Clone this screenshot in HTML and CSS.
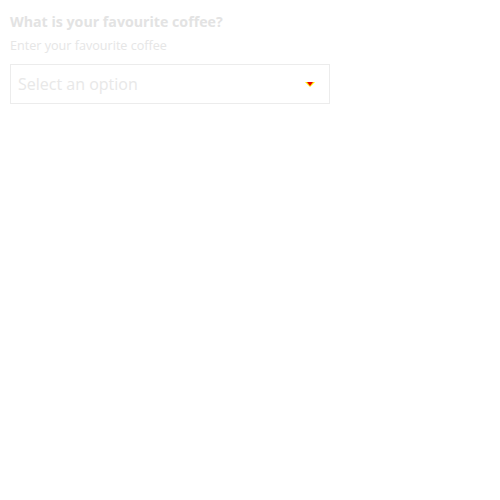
FILE: index.html
```html
<!DOCTYPE html>
<html>
<head>
<meta charset="utf-8">
<link rel="stylesheet" href="styles.css">
</head>
<body>
<div class="field">
  <div class="label">What is your favourite coffee?</div>
  <div class="hint">Enter your favourite coffee</div>
  <div class="select">
    <span class="placeholder">Select an option</span>
    <span class="arrow"><span class="arrow-inner"></span></span>
  </div>
</div>
</body>
</html>
```
FILE: styles.css
```css
html, body { margin: 0; padding: 0; background: #fff; }
body { font-family: "Open Sans", sans-serif; }
.field { padding: 12px 10px; width: 320px; }
.label { font-size: 14.2px; font-weight: 700; color: #e3e3e3; line-height: 20px; }
.hint { font-size: 12.6px; color: #e6e6e6; line-height: 16px; margin-top: 6px; }
.select {
  margin-top: 10px;
  height: 40px;
  box-sizing: border-box;
  border: 1px solid #ececec;
  display: flex;
  align-items: center;
  padding: 0 8px 0 7px;
}
.placeholder { flex: 1; font-size: 16px; color: #e8e8e8; }
.arrow {
  width: 0; height: 0;
  border-left: 5px solid transparent;
  border-right: 5px solid transparent;
  border-top: 5px solid #ffef00;
  position: relative;
  margin-right: 6px;
  margin-top: 1px;
}
.arrow-inner {
  position: absolute;
  left: -3px; top: -5px;
  width: 0; height: 0;
  border-left: 3px solid transparent;
  border-right: 3px solid transparent;
  border-top: 4px solid #e80000;
}
```
